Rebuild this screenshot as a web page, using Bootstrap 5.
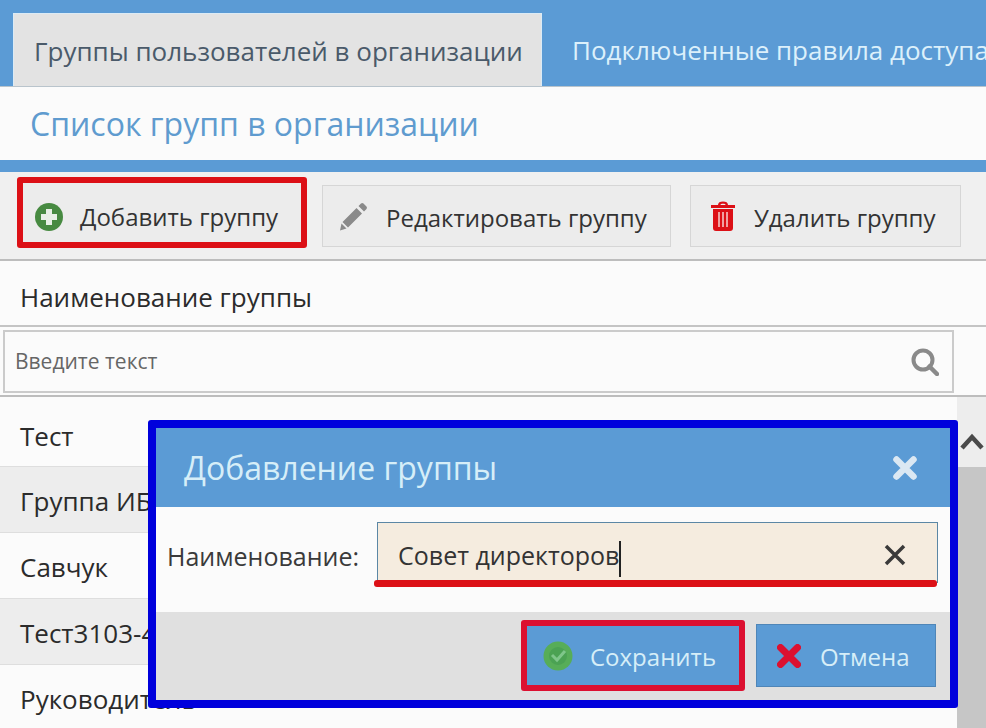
<!DOCTYPE html>
<html lang="ru">
<head>
<meta charset="utf-8">
<title>Группы</title>
<link href="https://cdn.jsdelivr.net/npm/bootstrap@5.3.0/dist/css/bootstrap.min.css" rel="stylesheet">
<style>
html,body{width:986px;height:728px;overflow:hidden;background:#fbfbfb}
body{font-family:"Open Sans","Noto Sans",sans-serif;color:#2e2e2e;position:relative}
.tabbar{height:87px;background:#5b9bd5;padding:13px 0 0 13px;border-bottom:1px solid #b9c4cc;white-space:nowrap;overflow:hidden}
.tab-on{width:529px;height:73px;background:#e3e3e3;border:solid #dcebf5;border-width:1px 1px 0 1px;font-size:26px;color:#4a5a6a;padding-left:20px;line-height:74px;flex:none}
.tab-off{font-size:26px;color:#dcf0fb;padding-left:30px;line-height:74px;flex:none}
.titlebar{height:73px;background:#fbfbfb;padding-left:30px;font-size:32px;line-height:74px;color:#5f9bcf}
.bluebar{height:12px;background:#5b9bd5}
.toolbar{height:89px;background:#f0f0f0;border-bottom:2px solid #bdbdbd;padding:5px 0 0 17px}
.tbtn{height:62px;background:#ececec;border:1px solid #d6d6d6;font-size:24px;color:#333;margin-top:8px;flex:none}
.tbtn span{margin-top:4px}
.tb-add{width:290px;height:71px;margin-top:0;border:6px solid #dc1016;border-radius:3px;padding:9px 0 0 12px;gap:17px;margin-right:15px}
.tb-add span{margin-top:0}
.tb-edit{width:349px;padding-left:16px;gap:18px;margin-right:19px}
.tb-del{width:271px;padding-left:19px;gap:18px}
.headrow{height:66px;padding-left:20px;font-size:26px;line-height:72px;border-bottom:2px solid #c4c4c4;color:#2b2b2b}
.filterrow{height:70px;padding:3px 0 0 3px;border-bottom:2px solid #bdbdbd}
.searchbox{width:951px;height:63px;border:2px solid #cbcbcb;background:#fbfbfb;padding:0 13px 0 10px;font-size:21px;color:#666}
.listwrap{height:332px}
.rowitem{height:66px;padding-left:20px;font-size:26px;line-height:69px;border-bottom:1px solid #dedede;color:#2b2b2b;white-space:nowrap}
.rowfirst{height:70px;line-height:78px}
.rowalt{background:#ededed}
.scrolltrack{width:29px;background:#c6c6c6;flex:none}
.scrolltop{height:70px;background:#ededed;padding-top:36px}
.dialogbox{position:absolute;left:148px;top:420px;width:810px;height:288px;border:8px solid #0000dc;border-radius:3px;background:#fbfbfb}
.dlg-head{height:79px;background:#5b9bd5;padding:0 33px 0 28px;font-size:32px;color:#d6eef8}
.dlg-body{height:105px;padding:15px 12px 0 11px;gap:20px;position:relative}
.dlg-label{font-size:25px;color:#3a3a3a;width:190px;flex:none;white-space:nowrap;line-height:68px;height:61px}
.dlg-input{width:561px;height:61px;background:#f5ecdf;border:1px solid #5b87a5;border-bottom:0;padding:4px 31px 0 20px;font-size:25px;color:#333}
.dlg-text{margin-top:4px}
.caret-bar{display:inline-block;width:2px;height:36px;background:#222;vertical-align:middle}
.red-line{position:absolute;left:218px;top:73px;width:563px;height:7px;background:#dc1016;border-radius:3px}
.dlg-foot{height:88px;background:#e0e0e0;padding:9px 14px 0 0;gap:11px}
.dbtn{height:63px;background:#5b9bd5;color:#d6eef8;font-size:24px;border:1px solid #4f86b8;margin-top:3px}
.dbtn span{margin-top:3px}
.db-save{width:224px;height:71px;margin-top:-1px;border:6px solid #dc1030;border-radius:3px;padding-left:16px;gap:17px}
.db-cancel{width:180px;padding-left:20px;gap:19px}
</style>
</head>
<body>
<div class="tabbar d-flex">
  <div class="tab-on">Группы пользователей в организации</div>
  <div class="tab-off">Подключенные правила доступа</div>
</div>
<div class="titlebar">Список групп в организации</div>
<div class="bluebar"></div>
<div class="toolbar d-flex">
  <div class="tbtn tb-add d-flex align-items-center">
    <svg width="28" height="28" viewBox="0 0 28 28"><circle cx="14" cy="14" r="14" fill="#478a41"/><path d="M11 6h6v5h5v6h-5v5h-6v-5H6v-6h5z" fill="#e8f0e6"/></svg>
    <span>Добавить группу</span>
  </div>
  <div class="tbtn tb-edit d-flex align-items-center">
    <svg width="29" height="29" viewBox="0 0 29 29"><path d="M22 1.500a2 2 0 0 1 2.500 0l3 3a2 2 0 0 1 0 2.500L25 9.500 19.500 4zM17.500 6l5.500 5.500L9 25.500 3.500 20z" fill="#8a8a8a"/><path d="M2.500 21.500l5 5L1 28.500z" fill="#8a8a8a"/></svg>
    <span>Редактировать группу</span>
  </div>
  <div class="tbtn tb-del d-flex align-items-center">
    <svg width="26" height="30" viewBox="0 0 26 30"><path d="M8 4C8 1.500 10 0.500 13 0.500S18 1.500 18 4h7v3H1V4zM10.500 4h5C15.500 3 14.500 2.800 13 2.800S10.500 3 10.500 4zM3 8h20v19a3 3 0 0 1-3 3H6a3 3 0 0 1-3-3z" fill="#dc1016" fill-rule="evenodd"/><path d="M8 11h2v15H8zM12 11h2v15h-2zM16 11h2v15h-2z" fill="#f0a0a0"/></svg>
    <span>Удалить группу</span>
  </div>
</div>
<div class="headrow">Наименование группы</div>
<div class="filterrow">
  <div class="searchbox d-flex align-items-center justify-content-between">
    <span>Введите текст</span>
    <svg width="28" height="28" viewBox="0 0 28 28"><circle cx="12" cy="12" r="9.500" fill="none" stroke="#8a8a8a" stroke-width="4"/><path d="M18.500 18.500L26 26" stroke="#8a8a8a" stroke-width="4.500" stroke-linecap="round"/></svg>
  </div>
</div>
<div class="listwrap d-flex">
  <div class="flex-grow-1">
    <div class="rowitem rowfirst">Тест</div>
    <div class="rowitem rowalt">Группа ИБ</div>
    <div class="rowitem">Савчук</div>
    <div class="rowitem rowalt">Тест3103-4</div>
    <div class="rowitem">Руководитель</div>
  </div>
  <div class="scrolltrack">
    <div class="scrolltop d-flex justify-content-center">
      <svg width="24" height="17" viewBox="0 0 24 17"><path d="M2 15L12 4l10 11" fill="none" stroke="#4a4a4a" stroke-width="4.500"/></svg>
    </div>
  </div>
</div>
<div class="dialogbox">
  <div class="dlg-head d-flex align-items-center justify-content-between">
    <span>Добавление группы</span>
    <svg width="24" height="24" viewBox="0 0 24 24"><path d="M3.500 3.500l17 17M20.500 3.500l-17 17" stroke="#dbe8f3" stroke-width="6.500" stroke-linecap="round"/></svg>
  </div>
  <div class="dlg-body d-flex">
    <div class="dlg-label">Наименование:</div>
    <div class="dlg-input d-flex align-items-center justify-content-between">
      <span class="dlg-text">Совет директоров<span class="caret-bar"></span></span>
      <svg width="22" height="22" viewBox="0 0 22 22"><path d="M2 2l18 18M20 2L2 20" stroke="#3a3a3a" stroke-width="3.500"/></svg>
    </div>
    <div class="red-line"></div>
  </div>
  <div class="dlg-foot d-flex justify-content-end">
    <div class="dbtn db-save d-flex align-items-center">
      <svg width="30" height="30" viewBox="0 0 30 30"><circle cx="15" cy="15" r="14.500" fill="#57ad58"/><circle cx="15" cy="15" r="9" fill="#4ba253"/><path d="M9 14l5 5 8-9" fill="none" stroke="#7fc68a" stroke-width="3"/></svg>
      <span>Сохранить</span>
    </div>
    <div class="dbtn db-cancel d-flex align-items-center">
      <svg width="24" height="24" viewBox="0 0 24 24"><path d="M3.500 3.500l17 17M20.500 3.500l-17 17" stroke="#dc1030" stroke-width="7" stroke-linecap="round"/></svg>
      <span>Отмена</span>
    </div>
  </div>
</div>
<script src="https://cdn.jsdelivr.net/npm/bootstrap@5.3.0/dist/js/bootstrap.bundle.min.js"></script>
</body>
</html>
